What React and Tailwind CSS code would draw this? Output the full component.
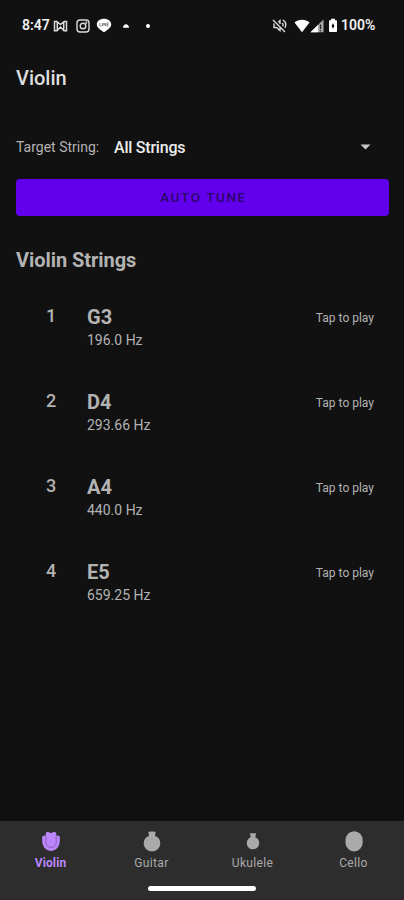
const strings = [
  { n: 1, note: 'G3', hz: '196.0 Hz' },
  { n: 2, note: 'D4', hz: '293.66 Hz' },
  { n: 3, note: 'A4', hz: '440.0 Hz' },
  { n: 4, note: 'E5', hz: '659.25 Hz' },
];

function StatusBar() {
  return (
    <div className="flex h-[51px] items-center pl-[22px] pr-[27px] text-[14px] font-semibold text-[#f2f2f2]">
      <span className="w-[31px] whitespace-nowrap">8:47</span>
      <svg className="h-[12px] w-[15px]" viewBox="0 0 14 12" fill="none" stroke="#dcdcdc" strokeWidth="1.5">
        <path d="M1 1.500h2.300l3.700 3 3.700-3H13v9.200h-2.500L7 7 3.500 10.700H1zM3.800 2v8.500M10.200 2v8.500" />
      </svg>
      <svg className="ml-[8px] h-[14px] w-[14px]" viewBox="0 0 14 14" fill="none" stroke="#dcdcdc" strokeWidth="1.400">
        <rect x="1" y="1" width="12" height="12" rx="3" />
        <circle cx="7" cy="7" r="2.800" />
        <circle cx="10.300" cy="3.700" r=".4" />
      </svg>
      <svg className="ml-[6px] h-[15px] w-[16px]" viewBox="0 0 16 15">
        <path fill="#fff" d="M8 .8c4 0 7.200 2.300 7.200 5.700 0 3.300-4 5.700-7.200 7.700C4.800 12.200.8 9.800.8 6.500.8 3.100 4 .8 8 .8z" />
        <path fill="none" stroke="#777" strokeWidth=".9" d="M3.900 5v3h1.500M6.500 5v3M7.900 8V5l1.800 3V5M12.600 5h-1.500v3h1.500M11.100 6.500h1.300" />
      </svg>
      <svg className="ml-[10px] h-[6px] w-[8px]" viewBox="0 0 8 6"><path fill="#fff" d="M1 4.800C1 0 7 0 7 4.800z" /></svg>
      <span className="ml-[16px] h-[4px] w-[4px] rounded-full bg-white" />
      <svg className="ml-auto h-[15px] w-[15px]" viewBox="0 0 15 15" fill="none" stroke="#dcdcdc" strokeWidth="1.400">
        <path d="M1 2l12 12M2 5.500v4h2.500l3.500 3V8.500M6.200 4.200L8 2.500V6M10 5.200c1.200.7 1.200 2 .8 3.100M10.800 2c3.200 1.800 3.500 5 2 7.800" />
      </svg>
      <svg className="ml-[7px] h-[14px] w-[16px]" viewBox="0 0 16 14"><path fill="#fff" d="M.5 3.600C4.500-.2 11.500-.2 15.500 3.600L8 13.200z" /></svg>
      <svg className="h-[14px] w-[14px]" viewBox="0 0 14 14">
        <path fill="#aaa" d="M.5 13.300L13.500.5v12.800z" />
        <path fill="#fff" d="M.5 13.300L8 6v7.300z" />
        <path stroke="#222" strokeWidth="1.300" d="M10.500 5.500v4.500M10.500 11v1.300" />
      </svg>
      <svg className="ml-[4px] h-[15px] w-[10px]" viewBox="0 0 10 15">
        <path fill="#fff" d="M3 .7h4v1.500h1.200c.5 0 .8.300.8.800v10.300c0 .5-.3.800-.8.800H1.800c-.5 0-.8-.3-.8-.8V3c0-.5.300-.8.800-.8H3z" />
        <path fill="#111" d="M5 5l1.400 2.900L5 10.800 3.600 7.900z" />
      </svg>
      <span className="ml-[3px] w-[36px] whitespace-nowrap">100%</span>
    </div>
  );
}

const tabs = [
  {
    label: 'Violin',
    icon: (
      <>
        <path fill="#bb86fc" d="M4.800 2.500C5 1 7 .8 8.300 1.500c1 .6 2.400.6 3.400 0C13 .8 15 1 15.200 2.500v2.200c1.200-.4 2.500.2 3.600.8v4.600C18.800 15.500 15 20 10 20S1.200 15.500 1.200 10.100V5.500c1.100-.6 2.400-1.200 3.600-.8z" />
        <path fill="none" stroke="#7c5ca6" strokeWidth=".8" d="M4.800 4.700v7c0 2 1.700 4.700 5.200 4.700s5.200-2.700 5.200-4.700v-7" />
      </>
    ),
  },
  {
    label: 'Guitar',
    icon: <path fill="#aaa" d="M6.500.8Q10 .1 13.500.8v2.200l-.5.700v1c3.200 1.200 5.300 4 5.300 7.300 0 4.700-3.500 8.300-8.300 8.300s-8.300-3.600-8.300-8.300c0-3.300 2.100-6.100 5.300-7.300v-1l-.5-.7z" />,
  },
  {
    label: 'Ukulele',
    icon: <path fill="#aaa" d="M7.100 2.300h5.800v1.500l-.4.600v2c2.200.9 3.700 2.900 3.700 5.500 0 3.700-2.700 6.400-6.200 6.400s-6.200-2.700-6.200-6.400c0-2.600 1.500-4.600 3.700-5.500v-2l-.4-.6z" />,
  },
  { label: 'Cello', icon: <rect x="1.500" y=".2" width="17.200" height="20.300" rx="8.500" ry="9" fill="#aaa" /> },
];

export default function App() {
  return (
    <div className="flex h-[900px] w-[404px] flex-col overflow-hidden bg-[#111111] font-['Roboto',sans-serif] text-[#b3b3b3]">
      <StatusBar />
      <header className="flex h-[54px] items-center pl-4 text-[20px] font-medium text-[#dedede]">Violin</header>
      <main className="flex flex-1 flex-col px-4 pt-[24px]">
        <div className="flex h-[36px] items-center">
          <span className="w-[98px] whitespace-nowrap text-[14px]">Target String:</span>
          <span className="pt-px text-[16px] font-medium tracking-[-0.22px] text-[#ececec]">All Strings</span>
          <svg className="ml-auto mr-[17px] h-[6px] w-[11px]" viewBox="0 0 11 6"><path fill="#c8c8c8" d="M.5.5h10l-5 5z" /></svg>
        </div>
        <button className="mr-[-1px] mt-[14px] flex h-[37px] items-center justify-center rounded-[4px] bg-[#6200ee] pl-[2px] text-[13.500px] font-medium tracking-[1.600px] text-[#2c0569]">
          AUTO TUNE
        </button>
        <h2 className="mt-[32px] text-[20px] font-bold leading-6 tracking-[-0.05px]">Violin Strings</h2>
        <div className="mt-[18px]">
          {strings.map((s) => (
            <div key={s.n} className="flex h-[85px] pl-[30px] pr-[14px] pt-[14px]">
              <span className="w-[41px] text-[18px] font-medium leading-6">{s.n}</span>
              <div className="flex flex-col">
                <span className="pt-px text-[20px] font-bold leading-6">{s.note}</span>
                <span className="mt-px whitespace-nowrap text-[14px] leading-5">{s.hz}</span>
              </div>
              <span className="ml-auto pt-[2px] text-[12px] leading-6">Tap to play</span>
            </div>
          ))}
        </div>
      </main>
      <nav className="flex h-[79px] flex-col items-center border-b-2 border-[#302631] bg-[#2d2d2d]">
        <div className="grid h-[65px] w-full grid-cols-4 pt-[10px]">
          {tabs.map((t, i) => (
            <div key={t.label} className={i === 0 ? 'flex flex-col items-center text-[12px] font-bold tracking-[0.1px] text-[#bb86fc]' : 'flex flex-col items-center text-[12px] tracking-[0.35px] text-[#aaaaaa]'}>
              <svg className="h-[21px] w-[20px]" viewBox="0 0 20 21">{t.icon}</svg>
              <span className="mt-[3px] leading-4">{t.label}</span>
            </div>
          ))}
        </div>
        <div className="h-[5px] w-[108px] rounded-full bg-white" />
      </nav>
    </div>
  );
}
